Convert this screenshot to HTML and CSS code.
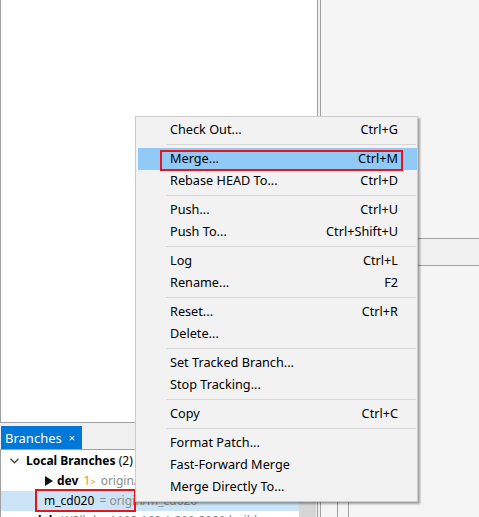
FILE: index.html
```html
<!DOCTYPE html>
<html>
<head>
<meta charset="utf-8">
<link rel="stylesheet" href="styles.css">
</head>
<body>
<div class="app">
  <div class="left">
    <div class="pane-top"></div>
    <div class="tabs">
      <div class="tab"><span class="tab-label">Branches</span><span class="tab-x">×</span></div>
    </div>
    <div class="tree">
      <div class="tree-list">
        <div class="row">
          <span class="chev"><svg width="9" height="6" viewBox="0 0 9 6"><path d="M0.5 0.8 L4.5 4.8 L8.5 0.8" fill="none" stroke="#444" stroke-width="1.3"/></svg></span>
          <span class="bold">Local Branches</span>&nbsp;<span>(2)</span>
        </div>
        <div class="row lvl2">
          <span class="tri"><svg width="8" height="10" viewBox="0 0 8 10"><path d="M0 0 L8 5 L0 10 Z" fill="#111"/></svg></span>
          <span class="bold">dev</span>&nbsp;<span class="ahead">1<small>&gt;</small></span>&nbsp;<span class="muted">origin/dev</span>
        </div>
        <div class="row lvl3 selected">
          <span>m_cd020</span>&nbsp;<span class="muted">= origin/m_cd020</span>
          <div class="redbox redbox-tree"></div>
        </div>
        <div class="row lvl3b">
          <span class="bold">lab</span>&nbsp;<span class="muted">W3lloh · 1192.168.1.200:8080 build</span>
        </div>
      </div>
      <div class="vscroll"><div class="thumb"></div></div>
    </div>
  </div>
  <div class="split"></div>
  <div class="right">
    <div class="r-top"></div>
    <div class="r-head"></div>
    <div class="r-body">
      <div class="r-col r-col1"></div>
      <div class="r-col r-col2"></div>
    </div>
  </div>

  <div class="menu">
    <div class="item"><span>Check Out...</span><span>Ctrl+G</span></div>
    <div class="sep"></div>
    <div class="item hot"><span>Merge...</span><span>Ctrl+M</span><div class="redbox redbox-menu"></div></div>
    <div class="item"><span>Rebase HEAD To...</span><span>Ctrl+D</span></div>
    <div class="sep"></div>
    <div class="item"><span>Push...</span><span>Ctrl+U</span></div>
    <div class="item"><span>Push To...</span><span>Ctrl+Shift+U</span></div>
    <div class="sep"></div>
    <div class="item"><span>Log</span><span>Ctrl+L</span></div>
    <div class="item"><span>Rename...</span><span>F2</span></div>
    <div class="sep"></div>
    <div class="item"><span>Reset...</span><span>Ctrl+R</span></div>
    <div class="item"><span>Delete...</span><span></span></div>
    <div class="sep"></div>
    <div class="item"><span>Set Tracked Branch...</span><span></span></div>
    <div class="item"><span>Stop Tracking...</span><span></span></div>
    <div class="sep"></div>
    <div class="item"><span>Copy</span><span>Ctrl+C</span></div>
    <div class="sep"></div>
    <div class="item"><span>Format Patch...</span><span></span></div>
    <div class="item"><span>Fast-Forward Merge</span><span></span></div>
    <div class="item"><span>Merge Directly To...</span><span></span></div>
  </div>
</div>
</body>
</html>
```

FILE: styles.css
```css
* { box-sizing: border-box; }
html, body {
  margin: 0;
  padding: 0;
  width: 479px;
  height: 517px;
  overflow: hidden;
  background: #f0f0f0;
  font-family: "Noto Sans", "Open Sans", sans-serif;
  font-size: 12px;
  color: #000;
}
.app {
  position: relative;
  display: flex;
  width: 479px;
  height: 517px;
}
.left {
  width: 318px;
  display: flex;
  flex-direction: column;
  flex: none;
}
.pane-top {
  height: 423px;
  background: #fff;
  border-left: 1px solid #a0a0a0;
  border-right: 1px solid #a0a0a0;
  border-bottom: 1px solid #a0a0a0;
  flex: none;
}
.tabs {
  height: 26px;
  padding-top: 3px;
  padding-left: 1px;
  flex: none;
  display: flex;
}
.tab {
  width: 81px;
  height: 23px;
  background: #0078d7;
  color: #fff;
  display: flex;
  align-items: center;
  padding-left: 4px;
}
.tab-label { font-size: 13px; }
.tab-x { margin-left: 7px; font-size: 11px; }
.tree {
  flex: 1;
  display: flex;
  background: #fff;
  border-top: 1px solid #a0a0a0;
  border-left: 1px solid #a0a0a0;
  border-right: 1px solid #a0a0a0;
  overflow: hidden;
}
.tree-list {
  flex: 1;
  padding-top: 1px;
  min-width: 0;
}
.row {
  position: relative;
  height: 20px;
  line-height: 20px;
  white-space: nowrap;
  display: flex;
  align-items: center;
  padding-left: 9px;
}
.chev { width: 16px; display: inline-flex; align-items: center; }
.bold { font-weight: bold; }
.lvl2 { padding-left: 44px; }
.tri { width: 12px; display: inline-flex; align-items: center; }
.lvl3 { padding-left: 43px; }
.lvl3b { padding-left: 37px; }
.ahead { color: #e8911c; margin-left: 2px; }
.ahead small { font-size: 9px; }
.muted { color: #8c8c8c; margin-left: 2px; }
.selected { background: #cce4f7; }
.redbox {
  position: absolute;
  border: 2px solid #e8141c;
}
.redbox-tree {
  left: 34px;
  top: -2px;
  width: 101px;
  height: 23px;
}
.vscroll {
  width: 18px;
  flex: none;
  background: #f0f0f0;
  padding: 0 1px 0 0;
}
.thumb {
  margin-top: 38px;
  height: 40px;
  background: #d6d6d6;
}
.split {
  width: 2px;
  flex: none;
  background: #f0f0f0;
}
.right {
  flex: 1;
  display: flex;
  flex-direction: column;
  border-left: 1px solid #a0a0a0;
  background: #f5f5f5;
}
.r-top { height: 238px; flex: none; }
.r-head {
  height: 28px;
  flex: none;
  background: #f0f0f0;
  border-top: 1px solid #a0a0a0;
  border-bottom: 1px solid #a0a0a0;
}
.r-body {
  flex: 1;
  display: flex;
}
.r-col { border-right: 1px solid #a0a0a0; }
.r-col1 { width: 17px; }
.r-col2 { width: 11px; }

.menu {
  position: absolute;
  left: 135px;
  top: 116px;
  width: 283px;
  background: #f2f2f2;
  border: 1px solid #cccccc;
  box-shadow: 2px 2px 2px rgba(0, 0, 0, 0.35);
  padding: 2px 0 3px 0;
  font-size: 12.7px;
}
.item {
  position: relative;
  height: 22px;
  line-height: 21px;
  display: flex;
  justify-content: space-between;
  padding-left: 34px;
  padding-right: 19px;
  white-space: nowrap;
}
.hot {
  background: #91c9f7;
  margin-left: 2px;
  padding-left: 32px;
}
.redbox-menu {
  left: 22px;
  top: 2px;
  width: 243px;
  height: 21px;
}
.sep {
  height: 7px;
  padding-top: 3px;
  margin-left: 30px;
  margin-right: 1px;
}
.sep::before {
  content: "";
  display: block;
  height: 1px;
  background: #d7d7d7;
}
```
